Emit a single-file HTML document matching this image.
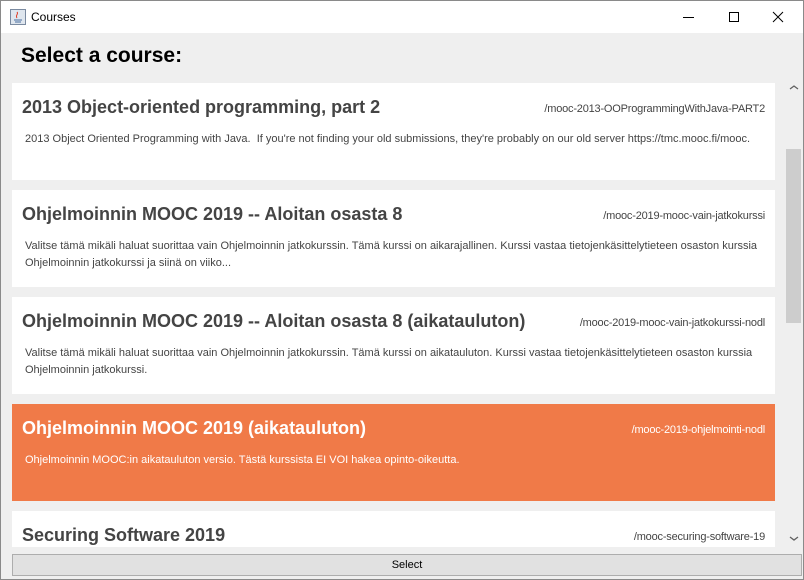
<!DOCTYPE html>
<html><head><style>
*{margin:0;padding:0;box-sizing:border-box}
body{width:804px;height:580px;overflow:hidden;background:#efefef;font-family:"Liberation Sans",sans-serif;position:relative}
.win{position:absolute;left:0;top:0;width:804px;height:580px;border:1px solid #8a8a8a;background:#efefef}
.tb{position:absolute;left:0;top:0;width:802px;height:32px;background:#fff}
.tb .t{position:absolute;left:31px;top:10px;font-size:12px;color:#000}
.h{position:absolute;left:20px;top:43px;font-size:21px;font-weight:bold;color:#000}
.vp{position:absolute;left:11px;top:82px;width:763px;height:464px;overflow:hidden}
.c{position:absolute;left:0;width:763px;height:97px;background:#fff;color:#444}
.c .n{position:absolute;left:10px;top:14px;font-size:18px;font-weight:bold}
.c .s{position:absolute;right:10px;top:20px;font-size:11px;letter-spacing:-.2px}
.c .d{position:absolute;left:13px;top:48px;font-size:11px;line-height:17px;width:745px}
.o{background:#f07a48;color:#fff}
.sb{position:absolute;left:784px;top:77px;width:17px;height:469px;background:#efefef}
.th{position:absolute;left:785px;top:148px;width:15px;height:174px;background:#cdcdcd}
.btn{position:absolute;left:11px;top:553px;width:790px;height:22px;background:#e1e1e1;border:1px solid #adadad;font-size:11px;text-align:center;line-height:20px;color:#000}
</style></head><body><div class="win">
<div class="tb">
<svg style="position:absolute;left:9px;top:8px" width="16" height="16"><rect x=".5" y=".5" width="15" height="15" fill="#dfe6ee" stroke="#7a8aa0"/><path d="M4 11h8M5 13h6" stroke="#4a6da0"/><path d="M7 3c2 2-2 3 0 6" stroke="#e0402a" fill="none"/></svg>
<div class="t" style="left:30px;top:9px">Courses</div>
<svg style="position:absolute;left:679px;top:9px" width="110" height="14"><path d="M3 7.5h11" stroke="#000"/><rect x="49.5" y="2.5" width="9" height="9" fill="none" stroke="#000"/><path d="M93 2l10 10M103 2L93 12" stroke="#000"/></svg>
</div>
<div class="h">Select a course:</div>
<div class="vp">
<div class="c" style="top:0"><div class="n">2013 Object-oriented programming, part 2</div><div class="s">/mooc-2013-OOProgrammingWithJava-PART2</div><div class="d">2013 Object Oriented Programming with Java.&nbsp; If you're not finding your old submissions, they're probably on our old server https://tmc.mooc.fi/mooc.</div></div>
<div class="c" style="top:107px"><div class="n">Ohjelmoinnin MOOC 2019 -- Aloitan osasta 8</div><div class="s">/mooc-2019-mooc-vain-jatkokurssi</div><div class="d">Valitse tämä mikäli haluat suorittaa vain Ohjelmoinnin jatkokurssin. Tämä kurssi on aikarajallinen. Kurssi vastaa tietojenkäsittelytieteen osaston kurssia Ohjelmoinnin jatkokurssi ja siinä on viiko...</div></div>
<div class="c" style="top:214px"><div class="n">Ohjelmoinnin MOOC 2019 -- Aloitan osasta 8 (aikatauluton)</div><div class="s">/mooc-2019-mooc-vain-jatkokurssi-nodl</div><div class="d">Valitse tämä mikäli haluat suorittaa vain Ohjelmoinnin jatkokurssin. Tämä kurssi on aikatauluton. Kurssi vastaa tietojenkäsittelytieteen osaston kurssia Ohjelmoinnin jatkokurssi.</div></div>
<div class="c o" style="top:321px"><div class="n">Ohjelmoinnin MOOC 2019 (aikatauluton)</div><div class="s">/mooc-2019-ohjelmointi-nodl</div><div class="d">Ohjelmoinnin MOOC:in aikatauluton versio. Tästä kurssista EI VOI hakea opinto-oikeutta.</div></div>
<div class="c" style="top:428px"><div class="n">Securing Software 2019</div><div class="s">/mooc-securing-software-19</div></div>
</div>
<div class="sb"></div><div class="th"></div>
<svg style="position:absolute;left:787px;top:80px" width="12" height="466"><path d="M2 8l4-3 4 3" stroke="#606060" fill="none" stroke-width="1.3"/><path d="M2 456l4 3 4-3" stroke="#606060" fill="none" stroke-width="1.3"/></svg>
<div class="btn">Select</div>
</div></body></html>
